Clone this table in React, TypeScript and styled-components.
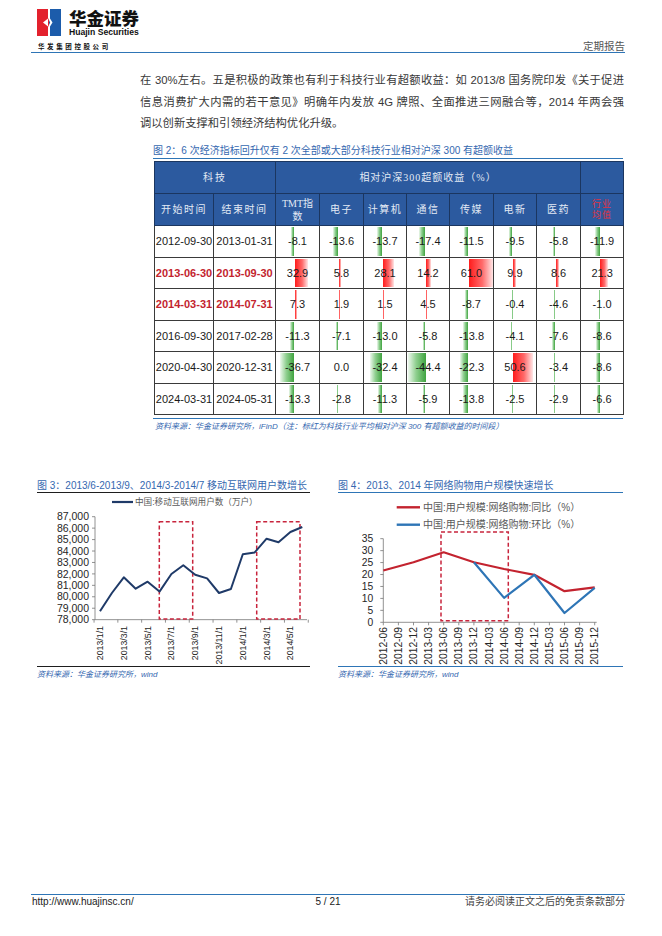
import styled, { createGlobalStyle } from 'styled-components';

const SANS = `"Liberation Sans", "Noto Sans CJK SC", sans-serif`;
const SVG_FONT = "'Liberation Sans', 'Noto Sans CJK SC', sans-serif";
const BLUE = '#2e75b6';
const CAPTION_BLUE = '#3568b0';
const NAVY = '#1f3a68';
const RED_LINE = '#c3232f';

const GlobalStyle = createGlobalStyle`
    html, body {
        margin: 0;
        padding: 0;
        background: #ffffff;
    }
    body {
        font-family: ${SANS};
        color: #222;
    }
`;

const Page = styled.div`
    width: 662px;
    height: 936px;
    display: flex;
    flex-direction: column;
    background: #fff;
    overflow: hidden;
`;

/* ---------- header ---------- */

const Header = styled.header`
    margin: 9px 37px 0 31px;
`;

const Brand = styled.div`
    display: flex;
    align-items: flex-start;
    gap: 8px;
    height: 27px;
    padding-left: 6px;
`;

const BrandText = styled.div`
    display: flex;
    flex-direction: column;
`;

const BrandCn = styled.div`
    font-family: "Noto Sans CJK SC", sans-serif;
    font-weight: 900;
    font-size: 17.5px;
    line-height: 18px;
    height: 19px;
    color: #111;
`;

const BrandEn = styled.div`
    font-family: "Liberation Sans", sans-serif;
    font-weight: bold;
    font-size: 8.6px;
    line-height: 8px;
    color: #111;
`;

const HeaderRule = styled.div`
    display: flex;
    justify-content: space-between;
    align-items: flex-end;
    height: 11px;
    margin-top: 5px;
    border-bottom: 1.5px solid ${BLUE};
`;

const GroupName = styled.span`
    padding-left: 7px;
    font-size: 6.5px;
    line-height: 11px;
    font-weight: bold;
    letter-spacing: 2.6px;
    color: #111;
`;

const ReportType = styled.span`
    font-size: 10.5px;
    line-height: 11px;
    color: #555;
`;

/* ---------- body text ---------- */

const Paragraph = styled.div`
    margin: 17px 38px 0 140px;
    font-size: 11.3px;
    line-height: 21.5px;
    color: #383838;
`;

const ParaLine = styled.div<{ $last?: boolean }>`
    text-align: justify;
    text-align-last: ${({ $last }) => ($last ? 'left' : 'justify')};
`;

/* ---------- table figure ---------- */

const FigureBlock = styled.section`
    margin: 9px 39px 0 153px;
`;

const TableCaption = styled.div`
    font-size: 10px;
    line-height: 14px;
    color: ${CAPTION_BLUE};
    border-bottom: 1.5px solid ${BLUE};
    white-space: nowrap;
`;

const DataTable = styled.table`
    width: 469px;
    margin: 2.5px 0 0 1px;
    border-collapse: collapse;
    table-layout: fixed;
`;

const Col = styled.col<{ $w: number }>`
    width: ${({ $w }) => $w}px;
`;

const HeadRow = styled.tr`
    height: 32px;
`;

const BodyRow = styled.tr`
    height: 31.5px;
`;

const HeadCell = styled.th<{ $alert?: boolean; $spacing?: number }>`
    padding: 0;
    background: #2c5a9f;
    border: 1px solid #1b3660;
    color: ${({ $alert }) => ($alert ? '#e2323f' : '#e3eaf5')};
    font-family: "Liberation Serif", "Noto Sans CJK SC", serif;
    font-weight: normal;
    font-size: ${({ $alert }) => ($alert ? '9px' : '10px')};
    line-height: ${({ $alert }) => ($alert ? '11px' : '13px')};
    letter-spacing: ${({ $spacing }) => $spacing ?? 1.5}px;
    text-align: center;
`;

const DateCell = styled.td<{ $hot?: boolean }>`
    padding: 0;
    border: 1px solid #3a3a3a;
    text-align: center;
    white-space: nowrap;
    font-size: 11px;
    color: ${({ $hot }) => ($hot ? '#c3242e' : '#1a1a1a')};
    font-weight: ${({ $hot }) => ($hot ? 'bold' : 'normal')};
`;

const ValueCell = styled.td`
    position: relative;
    padding: 0;
    border: 1px solid #3a3a3a;
    text-align: center;
    white-space: nowrap;
    font-size: 11px;
    color: #1a1a1a;
`;

const Bar = styled.span<{ $up: boolean }>`
    position: absolute;
    top: 1px;
    bottom: 1px;
    background: ${({ $up }) =>
        $up
            ? 'linear-gradient(to right, #ff1c1c 0%, #ff6a6a 55%, #ffe6e6 100%)'
            : 'linear-gradient(to left, #3fa33f 0%, #8fcf8f 55%, #eef8ee 100%)'};
`;

const ValueText = styled.span`
    position: relative;
`;

const SourceRule = styled.div`
    margin-top: 3px;
    border-top: 1.5px solid ${BLUE};
`;

const SourceNote = styled.div<{ $indent?: number }>`
    margin-top: 3px;
    padding-left: ${({ $indent }) => $indent ?? 0}px;
    font-size: 8px;
    line-height: 10px;
    font-style: italic;
    color: ${CAPTION_BLUE};
    white-space: nowrap;
`;

/* ---------- chart figures ---------- */

const FigureRow = styled.div`
    display: flex;
    gap: 28px;
    margin: 47px 0 0 37px;
`;

const Figure = styled.div<{ $w: number }>`
    width: ${({ $w }) => $w}px;
`;

const FigCaption = styled.div<{ $rule: string }>`
    font-size: 10px;
    line-height: 13px;
    color: ${CAPTION_BLUE};
    border-bottom: 1.5px solid ${({ $rule }) => $rule};
    white-space: nowrap;
`;

const ChartBox = styled.div<{ $rule: string }>`
    height: 173px;
    border-bottom: 1.5px solid ${({ $rule }) => $rule};

    svg {
        display: block;
    }
`;

/* ---------- footer ---------- */

const Footer = styled.footer`
    margin: auto 37px 27px 31px;
    border-top: 1.5px solid ${BLUE};
    display: grid;
    grid-template-columns: 1fr auto 1fr;
    font-size: 10px;
    line-height: 14px;
    color: #222;
`;

const FooterLeft = styled.span`
    padding-left: 1px;
`;

const FooterRight = styled.span`
    text-align: right;
    color: #444;
`;

/* ---------- data ---------- */

const colWidths = [59, 62, 44, 44, 43, 43, 44, 43, 44, 43];
const sectors = ['电子', '计算机', '通信', '传媒', '电新', '医药'];

const periods = [
    { start: '2012-09-30', end: '2013-01-31', vals: [-8.1, -13.6, -13.7, -17.4, -11.5, -9.5, -5.8, -11.9] },
    { start: '2013-06-30', end: '2013-09-30', hot: true, vals: [32.9, 5.8, 28.1, 14.2, 61.0, 9.9, 8.6, 21.3] },
    { start: '2014-03-31', end: '2014-07-31', hot: true, vals: [7.3, 1.9, 1.5, 4.5, -8.7, -0.4, -4.6, -1.0] },
    { start: '2016-09-30', end: '2017-02-28', vals: [-11.3, -7.1, -13.0, -5.8, -13.8, -4.1, -7.6, -8.6] },
    { start: '2020-04-30', end: '2020-12-31', vals: [-36.7, 0.0, -32.4, -44.4, -22.3, 50.6, -3.4, -8.6] },
    { start: '2024-03-31', end: '2024-05-31', vals: [-13.3, -2.8, -11.3, -5.9, -13.8, -2.5, -2.9, -6.6] },
];

const AXIS = 18.5;
const PX_PER_UNIT = 0.4;

function barGeometry(v: number) {
    if (v >= 0) {
        const len = Math.min(v * PX_PER_UNIT, 24);
        return { left: AXIS, width: Math.max(len, v > 0 ? 1 : 0) };
    }
    const len = Math.min(-v * PX_PER_UNIT, AXIS - 1);
    return { left: AXIS - len, width: Math.max(len, 1) };
}

const mobileUsers = [
    78730, 80330, 81700, 80710, 81320, 80450, 81990, 82750, 81930, 81610, 80330, 80680, 83710, 83880, 85080, 84760,
    85660, 86100,
];
const mobileLabels = ['2013/1/1', '2013/3/1', '2013/5/1', '2013/7/1', '2013/9/1', '2013/11/1', '2014/1/1', '2014/3/1', '2014/5/1'];

const quarters = [
    '2012-06', '2012-09', '2012-12', '2013-03', '2013-06', '2013-09', '2013-12', '2014-03',
    '2014-06', '2014-09', '2014-12', '2015-03', '2015-06', '2015-09', '2015-12',
];
const yoy: [number, number][] = [
    [0, 21.7], [2, 25.1], [4, 29.3], [6, 25.1], [8, 22.3], [10, 19.9], [12, 13.0], [14, 14.6],
];
const qoq: [number, number][] = [
    [6, 25.1], [8, 10.2], [10, 19.9], [12, 3.9], [14, 14.4],
];

/* ---------- drawings ---------- */

function LogoMark() {
    return (
        <svg width="24" height="27" viewBox="0 0 24 27">
            <rect x="0" y="0" width="12" height="27" fill="#e3212d" />
            <rect x="12" y="0" width="12" height="27" fill="#1c5cab" />
            <polygon points="11,0 13,0 13,9.5 15.5,13.5 13,17.5 13,27 11,27 11,18 13.2,13.5 11,9" fill="#fff" />
            <polygon points="6,13.5 11,9.5 11,17.5" fill="#fff" />
        </svg>
    );
}

function MobileUsersChart() {
    const x = (i: number) => 63 + i * 11.9;
    const y = (v: number) => 23.7 + ((87000 - v) / 1000) * 11.44;
    const ticks = Array.from({ length: 10 }, (_, k) => 87000 - k * 1000);
    const points = mobileUsers.map((v, i) => `${x(i).toFixed(1)},${y(v).toFixed(1)}`).join(' ');
    const base = y(78000);

    return (
        <svg width="273" height="173" viewBox="0 0 273 173" fontFamily={SVG_FONT}>
            <line x1="75" y1="9" x2="96" y2="9" stroke={NAVY} strokeWidth="2.2" />
            <text x="98" y="12" fontSize="8.6" fill="#595959">
                中国:移动互联网用户数（万户）
            </text>

            {ticks.map((t) => (
                <g key={t}>
                    <line x1="55" x2="58" y1={y(t)} y2={y(t)} stroke="#767676" strokeWidth="0.8" />
                    <text x="52" y={y(t) + 3.7} fontSize="10.5" textAnchor="end" fill="#262626">
                        {t.toLocaleString('en-US')}
                    </text>
                </g>
            ))}
            <line x1="58" y1={y(87000)} x2="58" y2={base} stroke="#767676" strokeWidth="0.8" />
            <line x1="58" y1={base} x2="270" y2={base} stroke="#767676" strokeWidth="0.8" />
            {Array.from({ length: 10 }, (_, k) => {
                const tx = x(0) - 5.95 + k * 2 * 11.9;
                return <line key={k} x1={tx} x2={tx} y1={base} y2={base + 3} stroke="#767676" strokeWidth="0.8" />;
            })}

            {mobileLabels.map((label, k) => (
                <text
                    key={label}
                    transform={`translate(${x(k * 2)},133) rotate(-90)`}
                    textAnchor="end"
                    dominantBaseline="central"
                    fontSize="8.8"
                    fill="#262626"
                >
                    {label}
                </text>
            ))}

            <rect x="122.3" y="28.7" width="33.4" height="97.3" fill="none" stroke="#c8243c" strokeWidth="1.5" strokeDasharray="4 2.5" />
            <rect x="219.7" y="28.7" width="43.3" height="97.3" fill="none" stroke="#c8243c" strokeWidth="1.5" strokeDasharray="4 2.5" />

            <polyline points={points} fill="none" stroke={NAVY} strokeWidth="2" strokeLinejoin="round" />
        </svg>
    );
}

function OnlineShoppingChart() {
    const x = (j: number) => 45.3 + j * 15.1;
    const y = (v: number) => 129.3 - v * 2.389;
    const ticks = [35, 30, 25, 20, 15, 10, 5, 0];
    const toPoints = (s: [number, number][]) => s.map(([j, v]) => `${x(j).toFixed(1)},${y(v).toFixed(1)}`).join(' ');
    const base = y(0);

    return (
        <svg width="285" height="173" viewBox="0 0 285 173" fontFamily={SVG_FONT}>
            <line x1="58.7" y1="14.3" x2="82" y2="14.3" stroke={RED_LINE} strokeWidth="2.4" />
            <text x="85" y="17.8" fontSize="10" fill="#595959">
                中国:用户规模:网络购物:同比（%）
            </text>
            <line x1="58.7" y1="31.7" x2="82" y2="31.7" stroke={BLUE} strokeWidth="2.4" />
            <text x="85" y="35.2" fontSize="10" fill="#595959">
                中国:用户规模:网络购物:环比（%）
            </text>

            {ticks.map((t) => (
                <g key={t}>
                    <line x1="42.3" x2="45.3" y1={y(t)} y2={y(t)} stroke="#767676" strokeWidth="0.8" />
                    <text x="35.3" y={y(t) + 3.6} fontSize="10.3" textAnchor="end" fill="#262626">
                        {t}
                    </text>
                </g>
            ))}
            <line x1="45.3" y1={y(35)} x2="45.3" y2={base} stroke="#767676" strokeWidth="0.8" />
            <line x1="45.3" y1={base} x2="258.7" y2={base} stroke="#767676" strokeWidth="0.8" />
            {quarters.map((q, j) => (
                <line key={`t${q}`} x1={x(j)} x2={x(j)} y1={base} y2={base + 3} stroke="#767676" strokeWidth="0.8" />
            ))}

            {quarters.map((q, j) => (
                <text
                    key={q}
                    transform={`translate(${x(j)},134) rotate(-90)`}
                    textAnchor="end"
                    dominantBaseline="central"
                    fontSize="10.3"
                    fill="#262626"
                >
                    {q}
                </text>
            ))}

            <rect x="103" y="39" width="67.3" height="88.7" fill="none" stroke="#c8243c" strokeWidth="1.5" strokeDasharray="4 2.5" />

            <polyline points={toPoints(yoy)} fill="none" stroke={RED_LINE} strokeWidth="2.2" strokeLinejoin="round" />
            <polyline points={toPoints(qoq)} fill="none" stroke={BLUE} strokeWidth="2.2" strokeLinejoin="round" />
        </svg>
    );
}

/* ---------- page ---------- */

function App() {
    return (
        <>
            <GlobalStyle />
            <Page>
                <Header>
                    <Brand>
                        <LogoMark />
                        <BrandText>
                            <BrandCn>华金证券</BrandCn>
                            <BrandEn>Huajin Securities</BrandEn>
                        </BrandText>
                    </Brand>
                    <HeaderRule>
                        <GroupName>华发集团控股公司</GroupName>
                        <ReportType>定期报告</ReportType>
                    </HeaderRule>
                </Header>

                <Paragraph>
                    <ParaLine>在 30%左右。五是积极的政策也有利于科技行业有超额收益：如 2013/8 国务院印发《关于促进</ParaLine>
                    <ParaLine>信息消费扩大内需的若干意见》明确年内发放 4G 牌照、全面推进三网融合等，2014 年两会强</ParaLine>
                    <ParaLine $last>调以创新支撑和引领经济结构优化升级。</ParaLine>
                </Paragraph>

                <FigureBlock>
                    <TableCaption>图 2：6 次经济指标回升仅有 2 次全部或大部分科技行业相对沪深 300 有超额收益</TableCaption>
                    <DataTable>
                        <colgroup>
                            {colWidths.map((w, i) => (
                                <Col key={i} $w={w} />
                            ))}
                        </colgroup>
                        <thead>
                            <HeadRow>
                                <HeadCell colSpan={2} $spacing={2}>
                                    科技
                                </HeadCell>
                                <HeadCell colSpan={7} $spacing={1}>
                                    相对沪深300超额收益（%）
                                </HeadCell>
                                <HeadCell />
                            </HeadRow>
                            <HeadRow>
                                <HeadCell>开始时间</HeadCell>
                                <HeadCell>结束时间</HeadCell>
                                <HeadCell $spacing={0}>
                                    TMT指
                                    <br />数
                                </HeadCell>
                                {sectors.map((s) => (
                                    <HeadCell key={s}>{s}</HeadCell>
                                ))}
                                <HeadCell $alert $spacing={1}>
                                    行业
                                    <br />
                                    均值
                                </HeadCell>
                            </HeadRow>
                        </thead>
                        <tbody>
                            {periods.map((p) => (
                                <BodyRow key={p.start}>
                                    <DateCell $hot={p.hot}>{p.start}</DateCell>
                                    <DateCell $hot={p.hot}>{p.end}</DateCell>
                                    {p.vals.map((v, i) => {
                                        const g = barGeometry(v);
                                        return (
                                            <ValueCell key={i}>
                                                {v !== 0 && <Bar $up={v > 0} style={{ left: g.left, width: g.width }} />}
                                                <ValueText>{v.toFixed(1)}</ValueText>
                                            </ValueCell>
                                        );
                                    })}
                                </BodyRow>
                            ))}
                        </tbody>
                    </DataTable>
                    <SourceRule />
                    <SourceNote $indent={2}>
                        资料来源：华金证券研究所，iFinD（注：标红为科技行业平均相对沪深 300 有超额收益的时间段）
                    </SourceNote>
                </FigureBlock>

                <FigureRow>
                    <Figure $w={273}>
                        <FigCaption $rule="#1e1e1e">图 3：2013/6-2013/9、2014/3-2014/7 移动互联网用户数增长</FigCaption>
                        <ChartBox $rule="#1e1e1e">
                            <MobileUsersChart />
                        </ChartBox>
                        <SourceNote>资料来源：华金证券研究所，wind</SourceNote>
                    </Figure>
                    <Figure $w={285}>
                        <FigCaption $rule={BLUE}>图 4：2013、2014 年网络购物用户规模快速增长</FigCaption>
                        <ChartBox $rule={BLUE}>
                            <OnlineShoppingChart />
                        </ChartBox>
                        <SourceNote>资料来源：华金证券研究所，wind</SourceNote>
                    </Figure>
                </FigureRow>

                <Footer>
                    <FooterLeft>http://www.huajinsc.cn/</FooterLeft>
                    <span>5 / 21</span>
                    <FooterRight>请务必阅读正文之后的免责条款部分</FooterRight>
                </Footer>
            </Page>
        </>
    );
}

export default App;
